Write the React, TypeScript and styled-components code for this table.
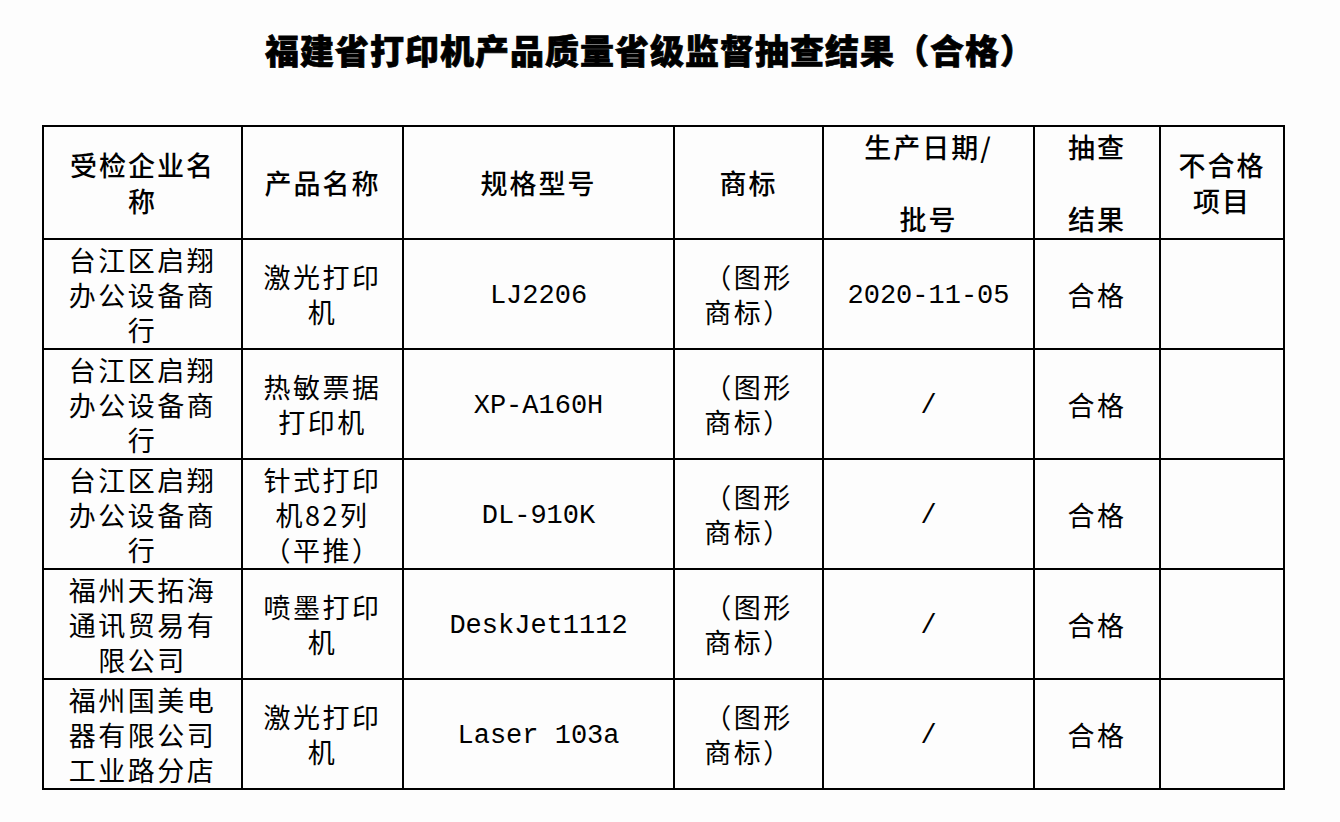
import React from "react";
import styled, { createGlobalStyle } from "styled-components";

const GlobalStyle = createGlobalStyle`
  html, body {
    margin: 0;
    padding: 0;
    background: #fdfdfd;
  }
  body {
    font-family: "Noto Sans CJK SC", "Noto Sans", sans-serif;
    color: #000;
  }
`;

const Page = styled.div`
  width: 1340px;
  height: 822px;
  padding-left: 42px;
  box-sizing: border-box;
  overflow: hidden;
`;

const Title = styled.h1`
  width: 1216px;
  margin: 0;
  padding-top: 31px;
  font-size: 34px;
  line-height: 38px;
  font-weight: 900;
  text-align: center;
  letter-spacing: 1px;
  -webkit-text-stroke: 0.7px #000;
`;

const Table = styled.table`
  margin-top: 56px;
  width: 1241px;
  border-collapse: collapse;
  table-layout: fixed;
  border: 2px solid #000;
`;

const HeadRow = styled.tr`
  height: 113px;
`;

const BodyRow = styled.tr`
  height: 110px;
`;

const HeadCell = styled.th`
  border: 2px solid #000;
  padding: 0;
  font-size: 27px;
  line-height: 36px;
  font-weight: 500;
  letter-spacing: 2px;
  text-align: center;
  vertical-align: middle;
`;

const Cell = styled.td<{ $mono?: boolean }>`
  border: 2px solid #000;
  padding: ${(p) => (p.$mono ? "4px 0 0" : "0")};
  font-family: ${(p) =>
    p.$mono
      ? `"Liberation Mono", "DejaVu Sans Mono", monospace`
      : `"Noto Sans CJK SC", "Noto Sans", sans-serif`};
  font-size: 27px;
  line-height: 35px;
  font-weight: 400;
  letter-spacing: ${(p) => (p.$mono ? "0" : "2.5px")};
  text-align: center;
  vertical-align: middle;
`;

const widths = [199, 161, 271, 149, 211, 126, 124];

const headers: React.ReactNode[] = [
  <>受检企业名<br />称</>,
  "产品名称",
  "规格型号",
  "商标",
  <>生产日期/<br /><br />批号</>,
  <>抽查<br /><br />结果</>,
  <>不合格<br />项目</>,
];

type Row = {
  company: string[];
  product: string[];
  model: string;
  date: string;
};

const rows: Row[] = [
  { company: ["台江区启翔", "办公设备商", "行"], product: ["激光打印", "机"], model: "LJ2206", date: "2020-11-05" },
  { company: ["台江区启翔", "办公设备商", "行"], product: ["热敏票据", "打印机"], model: "XP-A160H", date: "/" },
  { company: ["台江区启翔", "办公设备商", "行"], product: ["针式打印", "机82列", "（平推）"], model: "DL-910K", date: "/" },
  { company: ["福州天拓海", "通讯贸易有", "限公司"], product: ["喷墨打印", "机"], model: "DeskJet1112", date: "/" },
  { company: ["福州国美电", "器有限公司", "工业路分店"], product: ["激光打印", "机"], model: "Laser 103a", date: "/" },
];

const Lines: React.FC<{ lines: string[] }> = ({ lines }) => (
  <>
    {lines.map((l, i) => (
      <React.Fragment key={i}>
        {i > 0 && <br />}
        {l}
      </React.Fragment>
    ))}
  </>
);

const App: React.FC = () => {
  return (
    <Page>
      <GlobalStyle />
      <Title>福建省打印机产品质量省级监督抽查结果（合格）</Title>
      <Table>
        <colgroup>
          {widths.map((w, i) => (
            <col key={i} style={{ width: w }} />
          ))}
        </colgroup>
        <thead>
          <HeadRow>
            {headers.map((h, i) => (
              <HeadCell key={i}>{h}</HeadCell>
            ))}
          </HeadRow>
        </thead>
        <tbody>
          {rows.map((r, i) => (
            <BodyRow key={i}>
              <Cell><Lines lines={r.company} /></Cell>
              <Cell><Lines lines={r.product} /></Cell>
              <Cell $mono>{r.model}</Cell>
              <Cell><Lines lines={["（图形", "商标）"]} /></Cell>
              <Cell $mono>{r.date}</Cell>
              <Cell>合格</Cell>
              <Cell />
            </BodyRow>
          ))}
        </tbody>
      </Table>
    </Page>
  );
};

export default App;
